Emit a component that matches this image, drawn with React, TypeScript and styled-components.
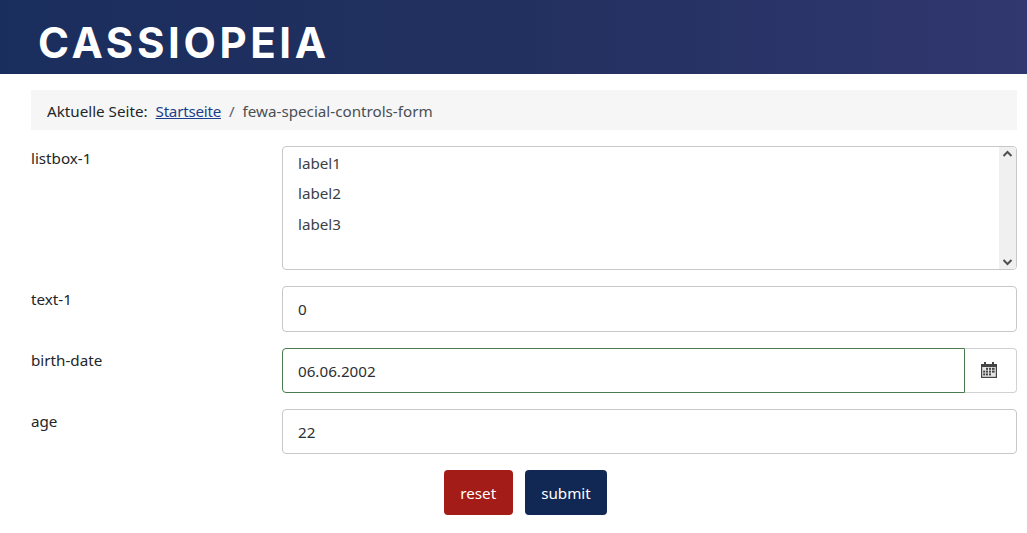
import React from 'react';
import styled, { createGlobalStyle } from 'styled-components';

const GlobalStyle = createGlobalStyle`
  html, body {
    margin: 0;
    padding: 0;
    background: #fff;
    color: #22262a;
    font-family: "Noto Sans", "Open Sans", sans-serif;
    font-size: 15.2px;
  }
  * { box-sizing: border-box; }
`;

const Header = styled.header`
  height: 74px;
  padding: 15px 0 0 38px;
  background: linear-gradient(90deg, #1a2e5e 0%, #22305f 50%, #31376f 100%);
`;

const Logo = styled.div`
  color: #fff;
  font-family: "Inter", sans-serif;
  font-weight: 700;
  font-size: 42px;
  line-height: 56px;
  letter-spacing: 3.6px;
`;

const Main = styled.main`
  padding: 16px 10px 0 31px;
`;

const Breadcrumb = styled.nav`
  display: flex;
  align-items: center;
  height: 40px;
  padding: 1px 0 0 16px;
  margin-bottom: 16px;
  background: #f6f6f6;
`;

const CrumbLabel = styled.span`
  margin-right: 8px;
`;

const CrumbLink = styled.a`
  color: #1b3f8b;
  letter-spacing: -0.25px;
  text-decoration: underline;
`;

const CrumbSep = styled.span`
  margin: 0 8px;
  color: #5a6068;
`;

const CrumbCurrent = styled.span`
  color: #4a4f55;
`;

const Row = styled.div`
  display: grid;
  grid-template-columns: 251px 1fr;
  margin-bottom: 16px;
`;

const Label = styled.label`
  padding-top: 1.4px;
  line-height: 22px;
`;

const ListBox = styled.div`
  display: flex;
  height: 124.2px;
  border: 1px solid #c8c8c8;
  border-radius: 4px;
  overflow: hidden;
`;

const Options = styled.div`
  flex: 1;
  padding: 1px 15px;
`;

const Option = styled.div`
  height: 30.4px;
  line-height: 30px;
  color: #3c4146;
`;

const ScrollBar = styled.div`
  display: flex;
  flex-direction: column;
  justify-content: space-between;
  align-items: center;
  width: 17px;
  padding: 3px 0;
  background: #f0f0f0;
`;

const TextInput = styled.div<{ $focused?: boolean }>`
  flex: 1;
  display: flex;
  align-items: center;
  height: 45.4px;
  padding: 1px 0 0 15px;
  border: 1px solid ${(p) => (p.$focused ? '#4a7a50' : '#c8c8c8')};
  border-radius: ${(p) => (p.$focused ? '4px 0 0 4px' : '4px')};
  color: #2b2f33;
`;

const InputGroup = styled.div`
  display: flex;
`;

const CalendarButton = styled.div`
  display: flex;
  align-items: center;
  justify-content: center;
  width: 52px;
  height: 45.4px;
  padding-right: 4px;
  border: 1px solid #d2d2d2;
  border-left: 0;
  border-radius: 0 4px 4px 0;
`;

const Actions = styled.div`
  display: flex;
  justify-content: center;
  gap: 12px;
  padding-left: 3px;
`;

const Button = styled.button<{ $bg: string }>`
  height: 45px;
  padding: 1px 16.5px 0;
  border: 0;
  border-radius: 4px;
  background: ${(p) => p.$bg};
  color: #fff;
  font: inherit;
`;

const Chevron = ({ up }: { up?: boolean }) => (
  <svg width="11" height="8" viewBox="0 0 11 8">
    <path d={up ? 'M1.5 6 5.5 2l4 4' : 'M1.5 2l4 4 4-4'} fill="none" stroke="#505050" strokeWidth="2" />
  </svg>
);

const CalendarIcon = () => (
  <svg width="16" height="16" viewBox="0 0 16 16">
    <path fill="#444" d="M0 2h3V0h2v2h6V0h2v2h3v14H0z" />
    <rect x="1.2" y="5" width="13.6" height="9.8" fill="#e4e4e4" />
    <g fill="#444">
      <rect x="5" y="5.8" width="2" height="2" />
      <rect x="8" y="5.8" width="2" height="2" />
      <rect x="11" y="5.8" width="2.6" height="2" />
      <rect x="2.2" y="8.6" width="2" height="2" />
      <rect x="5" y="8.6" width="2" height="2" />
      <rect x="8" y="8.6" width="2" height="2" />
      <rect x="11" y="8.6" width="2.6" height="2" />
      <rect x="2.2" y="11.4" width="2" height="2" />
      <rect x="5" y="11.4" width="2" height="2" />
      <rect x="8" y="11.4" width="2" height="2" />
    </g>
  </svg>
);

export default function App() {
  return (
    <>
      <GlobalStyle />
      <Header>
        <Logo>CASSIOPEIA</Logo>
      </Header>
      <Main>
        <Breadcrumb>
          <CrumbLabel>Aktuelle Seite:</CrumbLabel>
          <CrumbLink href="#">Startseite</CrumbLink>
          <CrumbSep>/</CrumbSep>
          <CrumbCurrent>fewa-special-controls-form</CrumbCurrent>
        </Breadcrumb>
        <Row>
          <Label>listbox-1</Label>
          <ListBox>
            <Options>
              <Option>label1</Option>
              <Option>label2</Option>
              <Option>label3</Option>
            </Options>
            <ScrollBar>
              <Chevron up />
              <Chevron />
            </ScrollBar>
          </ListBox>
        </Row>
        <Row>
          <Label>text-1</Label>
          <TextInput>0</TextInput>
        </Row>
        <Row>
          <Label>birth-date</Label>
          <InputGroup>
            <TextInput $focused>06.06.2002</TextInput>
            <CalendarButton>
              <CalendarIcon />
            </CalendarButton>
          </InputGroup>
        </Row>
        <Row>
          <Label>age</Label>
          <TextInput>22</TextInput>
        </Row>
        <Actions>
          <Button $bg="#a31c17">reset</Button>
          <Button $bg="#112855">submit</Button>
        </Actions>
      </Main>
    </>
  );
}
